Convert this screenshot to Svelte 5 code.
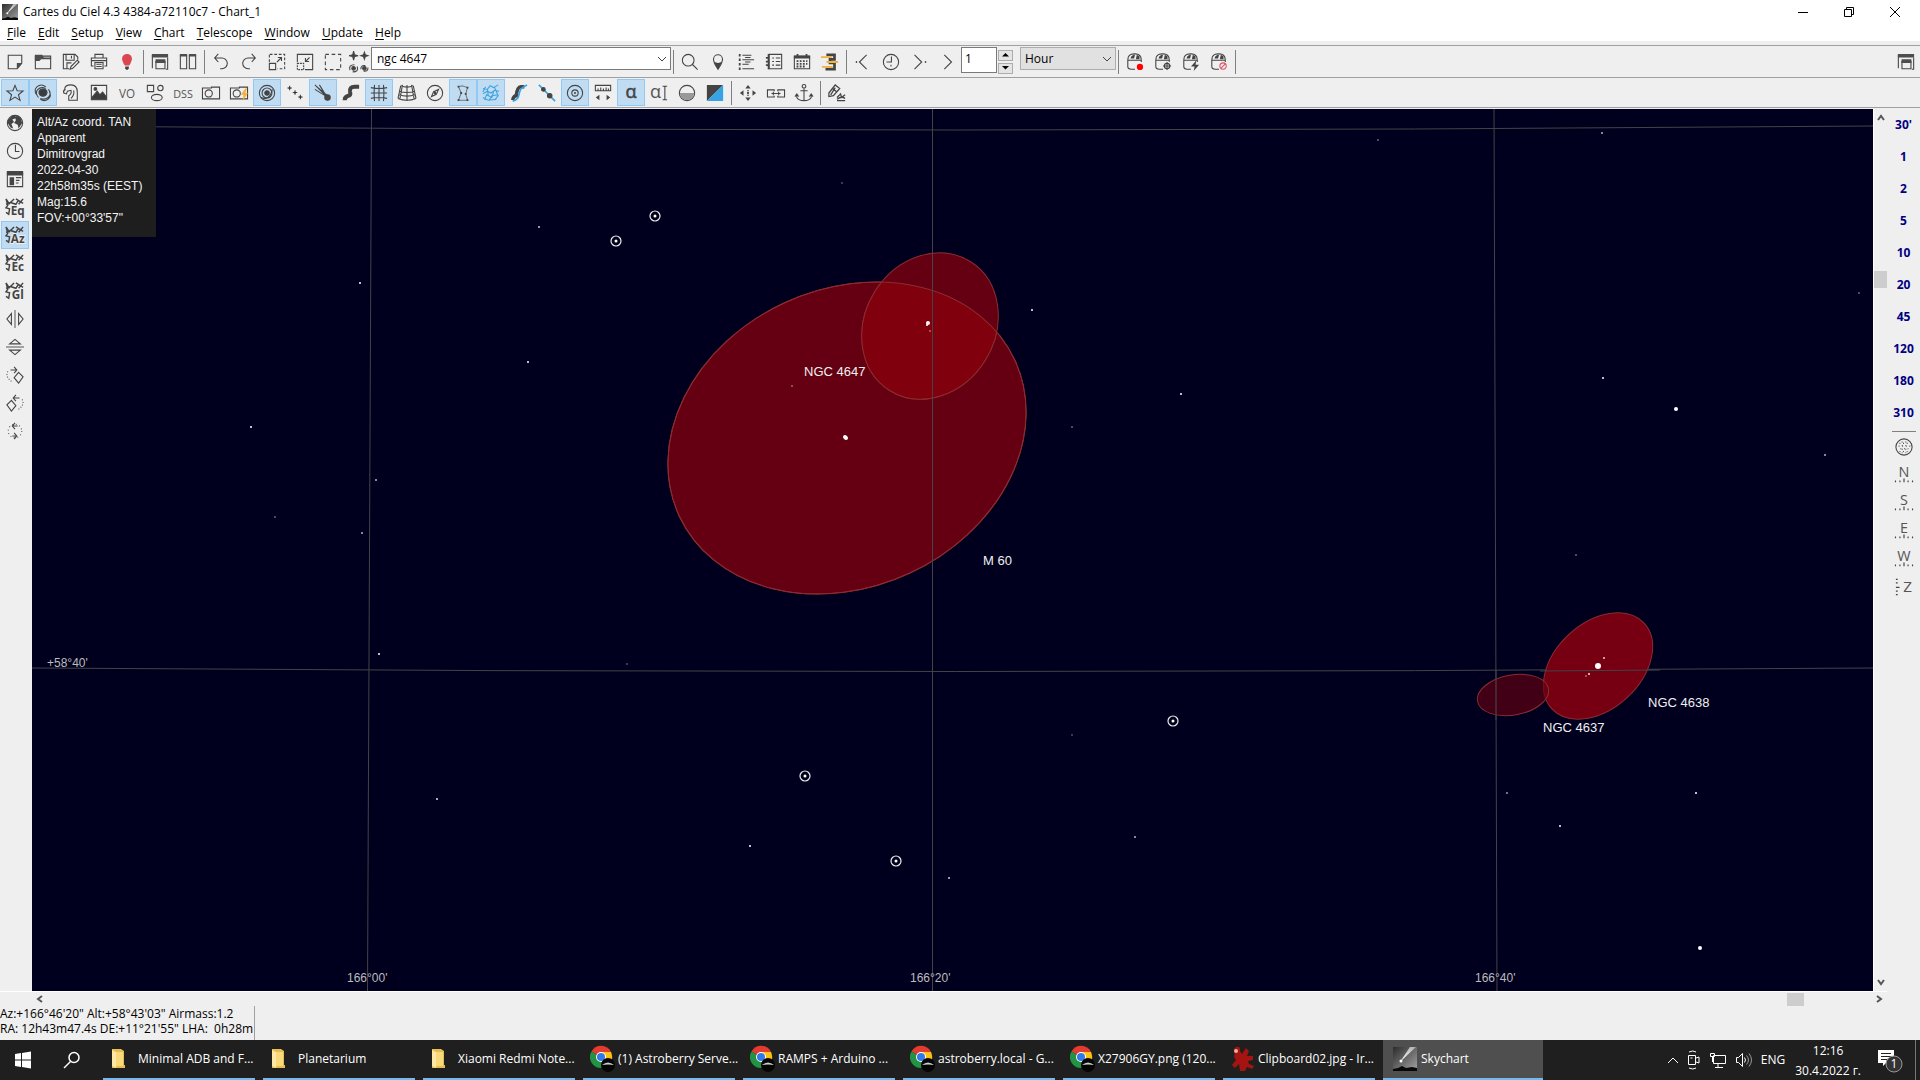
<script lang="ts">
    type Tool = { id: string; label: string; on?: boolean };

    // every drawing sits in a 20x20 box, stroked with the toolbar grey
    const legend = `<path d="M0 1l4 6M0 7l5-2 4-4M5 5l6 2 3-5M11 1l8 5M14 7l5-6M0 1l2 7-2 3 4 1-1 6-3-2" stroke-width="1.600"/>`;
    const mouse = `<path d="M2 8v7q0 3 4 3h4M17 8v2M2 8h15M2 8q0-7 7-7h1q7 0 7 7"/><path d="M5 6q1-4 5-4l-1 4H5zM12 2l3 2v3h-4z" fill="#444" stroke="none"/>`;
    const camera = `<path d="M.5 4.500h10v-1h9v13H.5z"/><circle cx="7.500" cy="10.500" r="4"/>`;
    const ticks = `<path d="M.5 16v2M5.500 16v2M10 14v4M14.500 16v2M19.500 16v2" stroke-width="1.300"/>`;

    const icons: Record<string, string> = {
        newchart: `<path d="M2.500 2.500h15v9l-5 6h-10z" /><path d="M18 11l-6 7v-7z" fill="#4d4d4d" stroke="none"/>`,
        open: `<path d="M1.500 17.500v-14h17v14z"/><path d="M1 2h8l2 3h8v2H8L6 9H1z" fill="#4d4d4d" stroke="none"/>`,
        save: `<path d="M8 17.500H1.500v-16h13l3 3v3M4.500 2v6h9V2M10.500 3v3M5.500 17v-6h5"/><path d="M10 15l7-7 2 2-7 7-3 1z"/>`,
        print: `<path d="M5.500 6V1.500h9V6M4 14.500H1.500v-9h17v9H16M5.500 10.500h9v7h-9zM2 8.500h16M7 12.500h6M7 15h6"/>`,
        tip: `<path d="M10 1a5.500 5.500 0 0 1 5.500 5.500Q15.500 9 12.500 14h-5Q4.500 9 4.500 6.500A5.500 5.500 0 0 1 10 1z" fill="#dc4650" stroke="none"/><path d="M8 15h4v2l-1 1.500H9L8 17z" fill="#444" stroke="none"/>`,
        cascade: `<path d="M1.500 17V2M18.500 5v13h-2M5.500 9v8.500h10V9"/><path d="M1 1h18v4H1zM5 7h11v4H5z" fill="#4d4d4d" stroke="none"/>`,
        tile: `<path d="M1.500 2v15.500h7V2M11.500 2v15.500h7V2"/><path d="M1 1h8v3H1zM11 1h8v3h-8z" fill="#4d4d4d" stroke="none"/>`,
        undo: `<path d="M7 1L3 5.500 7 10M3.500 5.500H11a6 6 0 0 1 0 12H9"/>`,
        redo: `<path d="M13 1l4 4.500L13 10M16.500 5.500H9a6 6 0 0 0 0 12h2"/>`,
        zoomin: `<path d="M1.500 11.500h7v7h-7zM10 10l5-5M11 5h4v4"/><path d="M2 1.500h16.500v16h-8M1.500 2v8" stroke-dasharray="3 2"/>`,
        zoomout: `<path d="M1.500 10V1.500h17v17H10M15 5l-4.500 4.500M10.500 5.500v4h4"/><path d="M1.500 11.500h7v7h-7z" stroke-dasharray="2 1"/>`,
        area: `<path d="M1.500 1.500h17v17h-17z" stroke-dasharray="4 3"/>`,
        search: `<circle cx="8" cy="8" r="6.500"/><path d="M12.500 12.500L18.500 18.500"/>`,
        pin: `<path d="M10 18Q5 11 5 7a5 5 0 0 1 10 0q0 4-5 11z"/><path d="M5.500 9.500q4.500 3 9 0L10 18.500z" fill="#444" stroke="none"/>`,
        list: `<path d="M6 2.500h10M6 7.500h13M6 12.500h7M6 17.500h13M9 5h6M9 10h6"/><path d="M2 2.500h2M2 7.500h2M2 12.500h2M2 17.500h2" stroke-width="3"/>`,
        notes: `<path d="M4.500 1.500h14v16h-14z"/><path d="M4 1v17M1 5.500h4M1 9.500h4M1 13.500h4" stroke-width="2"/><path d="M8 5.500h2M12 5.500h5M8 9.500h2M12 9.500h5M8 13.500h2M12 13.500h5"/>`,
        calendar: `<path d="M1.500 3.500h17v14h-17z"/><path d="M1 3h18v3H1zM4 1h2v3H4zM14 1h2v3h-2z" fill="#444" stroke="none"/><path d="M4 9h12M4 12h12M4 15h9" stroke-width="2" stroke-dasharray="2 1.500"/>`,
        sequence: `<path d="M6 2h9v5h-5v4h5v7H5" stroke-width="3"/><path d="M0 4.500h12M6 10h13M1 15.500h12" stroke="#f5b13c" stroke-width="2"/>`,
        back: `<path d="M14 2L6 10l8 8"/><path d="M2 10h1.500" stroke-width="2"/>`,
        clock: `<circle cx="10" cy="10" r="8.500"/><path d="M10.500 4v6H5M10 13v2"/>`,
        forward: `<path d="M5 2l8 8-8 8"/><path d="M16.500 10H18" stroke-width="2"/>`,
        play: `<path d="M7 2l8 8-8 8"/>`,
        connect: mouse + `<circle cx="15.500" cy="15.500" r="3.500" fill="#f00" stroke="none"/>`,
        slew: mouse + `<circle cx="14.500" cy="14.500" r="3"/><path d="M14.500 10v9M10 14.500h9"/>`,
        sync: mouse + `<path d="M16 8l-6 7h4l-1 5 6-7h-4z" fill="#444" stroke="none"/>`,
        abort: mouse + `<g stroke="#e05060"><circle cx="14.500" cy="14.500" r="3.500"/><path d="M12 17l5-5"/></g>`,
        star: `<path d="M10 1.500l2.400 6 6.600.3-5.200 4.100 1.800 6.300L10 14.600l-5.600 3.600 1.800-6.300L1 7.800l6.600-.3z"/>`,
        galaxy: `<ellipse cx="10" cy="9.500" rx="4.500" ry="4" fill="#3c3c3c"/><path d="M3 12C-2 5 6-2 13 3M5 15C-1 8 6 2 13 5M16 6c5 6-1 13-9 10M17 8c4 7-4 13-10 9"/>`,
        nebula: `<path d="M2 9Q1 8 3 6q0-5 7-5 7 0 7 8v9H7.500v-5Q11 11 10 7L6 8l-1 3-3-1q-1-3 2-4M13 7q1 5-3 9"/>`,
        picture: `<path d="M1.500 1.500h17v16h-17z"/><path d="M2 15l6-7 3 4 3-3 4 5v3H2z" fill="#3c3c3c"/><circle cx="6" cy="5.500" r="1.500" fill="#3c3c3c"/>`,
        vo: `<text x="10" y="15" text-anchor="middle" font-size="13" fill="#555" stroke="none">VO</text>`,
        shapes: `<path d="M1.500 1.500h7v7h-7z"/><circle cx="16" cy="4.500" r="3"/><ellipse cx="12" cy="15" rx="6" ry="3.500"/>`,
        dss: `<text x="10" y="15" text-anchor="middle" font-size="12" fill="#555" stroke="none">DSS</text>`,
        camera,
        flash: camera + `<path d="M17 5l-5 7h3l-1 7 6-9h-3l2-5z" fill="#f5b13c" stroke="none"/>`,
        planet: `<circle cx="10" cy="10" r="8.500"/><circle cx="10" cy="10" r="5.500"/><circle cx="10" cy="10" r="2.500" fill="#444"/><path d="M3 15q10 4 13-9"/>`,
        asteroid: `<path d="M4 2v5M1.500 4.500h5M10 7v5M7.500 9.500h5M16 12v5M13.500 14.500h5"/><path d="M3 3.500h2v2H3zM9 8.500h2v2H9zM15 13.500h2v2h-2z" fill="#333" stroke="none"/>`,
        comet: `<path d="M1 1l13 13M1 6l13 8M6 1l8 13M3 3l12 10"/><circle cx="15" cy="15" r="3" fill="#444"/>`,
        milkyway: `<path d="M3 18q0-4 4-5 3 0 2-4-1-6 5-6h5" stroke-width="4.500"/>`,
        grid: `<path d="M5 1q-1 9 0 18M10 1v18M15 1q1 9 0 18M1 4q9 2 18 0M1 10h18M1 16q9-2 18 0"/>`,
        azgrid: `<path d="M3 2q7 3 14 0M2 8q8 3 16 0M0 16q10 4 20 0M5 1L2 17M10 1v18M15 1l3 16M1 12q9 3 18 0M3 2L0 16M17 2l3 14"/>`,
        compass: `<circle cx="10" cy="10" r="8.500"/><path d="M14 6l-2.500 5.500L6 14l2.500-5.500z"/><circle cx="10" cy="10" r="1" fill="#444"/>`,
        figure: `<path d="M5 3l4-1 6 2-2 7 2 7H5l3-8z" stroke="#777"/><path d="M4 3h2M14 4h2M7 10h2M4 18h2M14 18h2M12 11h2" stroke-width="2"/>`,
        boundary: `<g stroke="#3da3e0"><path d="M1 5l5 1 3-4 4 2 5-3M1 11l5-3 4 2 4-3 5 1M3 18l2-6 6 3 2-7M8 18l3-5 7-1M4 3L1 9M14 4l4 9-4 5M6 6l1 7M1 15l6 3 9-1"/></g>`,
        outline: `<path d="M3 18q1-5 4-5 1-10 5-10h4" stroke-width="4"/><path d="M3 19C15 16 5 6 19 1" stroke="#36a4e4" stroke-width="1.800"/>`,
        ecliptic: `<path d="M1 1l18 18" stroke="#36a4e4" stroke-width="1.800"/><circle cx="6" cy="6" r="2" fill="#444"/><circle cx="13" cy="13" r="2.500" fill="#444"/>`,
        mark: `<circle cx="10" cy="10" r="8.500"/><circle cx="10" cy="10" r="3.500"/><circle cx="10" cy="10" r=".5"/>`,
        ruler: `<path d="M1.500 1.500h17v6h-17zM4.500 5v2M7.500 4v3M10.500 5v2M13.500 4v3M16 5v2"/><path d="M6 12v6l-4-3zM14 12v6l4-3z" fill="#444" stroke="none"/>`,
        alpha: `<text x="10" y="16" text-anchor="middle" font-size="20" fill="#444" stroke="#444" stroke-width=".6">α</text>`,
        alphabar: `<text x="6" y="16" text-anchor="middle" font-size="20" fill="#555" stroke="none">α</text><path d="M14 2.500h5M14 17.500h5M16.500 3v14"/>`,
        horizon: `<circle cx="10" cy="10" r="8.500"/><path d="M2 10h16a8 8 0 0 1-16 0z" fill="#999" stroke="none"/>`,
        invert: `<path d="M1 1h18L1 19z" fill="#444" stroke="none"/><path d="M19 1v18H1z" fill="#36a4e4" stroke="none"/>`,
        move: `<path d="M10 1l3 4H7zM10 19l3-4H7zM1 10l4-3v6zM19 10l-4-3v6z" fill="#444" stroke="none"/><path d="M9 10h2M10 7v1M10 12v1" stroke-width="2"/>`,
        link: `<path d="M8 8V6.500H.5v8H8V13M12 8V6.500h7.500v8H12V13M5 10.500h10M7 8.500v4M13 8.500v4"/>`,
        anchor: `<circle cx="10" cy="2.500" r="2"/><path d="M10 5v13M6 7.500h8M2 12v3q2 3.500 8 3.500t8-3.500v-3M0 14l2-3 2 3M20 14l-2-3-2 3"/>`,
        pencil: `<path d="M1 10l7-9 5 4-7 8-5 1zM5 5l5 4M3 12l5-8M10 18.500h9M10 15l4-4 1 4 4-3M10 17q5-4 9-1" stroke-width="1.400"/>`,
        globe: `<circle cx="10" cy="10" r="8.500"/><path d="M2 7l5-5 4 0-1 3-3 1 2 3-3 2 2 5-3-1-3-5zM12 2l4 2 2 6-4 6-1-4-4-2 2-3-1-3z" fill="#444" stroke="none"/>`,
        time: `<circle cx="10" cy="10" r="8.500"/><path d="M10.500 3v7.500H15"/>`,
        info: `<path d="M1.500 2v16.500h17V2"/><path d="M1 1h18v5H1zM4 8h5v9H4z" fill="#444" stroke="none"/><path d="M11 8.500h6M11 11.500h4M11 14.500h3"/>`,
        fliph: `<path d="M10 0v20" stroke="#999" stroke-width="2"/><path d="M6 4v12l-5-6zM14 4v12l5-6z"/>`,
        flipv: `<path d="M0 10h20" stroke="#999" stroke-width="2"/><path d="M4 6.500h12l-6-5zM4 13.500h12l-6 5z"/>`,
        rotr: `<path d="M14 7l5 5-5 7-5-6zM5 4.500h6M9 1l3 3.500L9 8"/><path d="M2 6q-3 6 4 11" stroke-dasharray="1 2"/>`,
        rotl: `<path d="M6 7l-5 5 5 7 5-6zM15 4.500H9M11 1L8 4.500 11 8"/><path d="M18 6q3 6-4 11" stroke-dasharray="1 2"/>`,
        rotate: `<path d="M13 4.500H8M10 1L7 4.500 10 8M7 15.500h5M9 12l3 3.500L9 19"/><circle cx="10" cy="10" r="7.500" stroke-dasharray="1 3"/>`,
        allsky: `<circle cx="10" cy="10" r="9"/><path d="M5 6h10M4 9h13M6 12h10M5 15h10M8 4v13M12 4v13" stroke-dasharray="1 3"/>`,
        zenith: `<path d="M1 1.500h2M1 5.500h2M1 10.500h4M1 14.500h2M1 18.500h2" stroke-width="1.300"/><text x="14" y="16" text-anchor="middle" font-size="17" fill="#555" stroke="none">Z</text>`,
    };
    for (const s of ["Eq", "Az", "Ec", "Gl"]) {
        icons[s] = legend + `<text x="13" y="19" text-anchor="middle" font-size="13" font-weight="700" fill="#444" stroke="#efefef" stroke-width="2" paint-order="stroke">${s}</text>`;
    }
    for (const s of ["N", "S", "E", "W"]) {
        icons[s] = ticks + `<text x="10" y="12" text-anchor="middle" font-size="16" fill="#555" stroke="none">${s}</text>`;
    }

    function tools(names: string, on: string[] = []): Tool[] {
        return names.split(" ").map((id) => ({ id, label: id, on: on.includes(id) }));
    }

    const fileTools = tools("newchart open save print tip");
    const windowTools = tools("cascade tile");
    const viewTools = tools("undo redo zoomin zoomout area");
    const findTools = tools("search pin list notes calendar sequence");
    const timeTools = tools("back clock forward play");
    const scopeTools = tools("connect slew sync abort");
    const objectTools = tools(
        "star galaxy nebula picture vo shapes dss camera flash planet asteroid comet milkyway grid azgrid compass figure boundary outline ecliptic mark ruler alpha alphabar horizon invert",
        ["star", "galaxy", "planet", "comet", "grid", "figure", "boundary", "mark", "alpha"]
    );
    const moveTools = tools("move link anchor");
    const leftTools = tools("globe time info Eq Az Ec Gl fliph flipv rotr rotl rotate", ["Az"]);
    const rightTools = tools("allsky N S E W zenith");

    const menus = ["File", "Edit", "Setup", "View", "Chart", "Telescope", "Window", "Update", "Help"];
    const fields = ["30'", "1", "2", "5", "10", "20", "45", "120", "180", "310"];

    // x, y, radius, opacity
    const stars = [
        [539, 227, 1, 0.8], [360, 283, 1, 1], [528, 362, 1, 1], [251, 427, 1, 1],
        [376, 480, 1, 0.7], [275, 517, 1, 0.4], [362, 533, 1, 0.7], [379, 654, 1, 1],
        [627, 664, 1, 0.3], [437, 799, 1, 0.9], [750, 846, 1, 1], [949, 878, 1, 0.8],
        [1135, 837, 1, 0.7], [1072, 735, 1, 0.3], [1072, 427, 1, 0.4], [1181, 394, 1, 1],
        [1032, 310, 1, 1], [842, 183, 1, 0.3], [792, 386, 1, 0.4], [845, 437, 2, 1],
        [846, 438, 2, 1], [928, 323, 2, 1], [927, 325, 1, 1], [930, 331, 1, 0.4],
        [1378, 140, 1, 0.4], [1602, 133, 1, 0.7], [1859, 293, 1, 0.4], [1603, 378, 1, 1],
        [1676, 409, 2, 1], [1825, 455, 1, 0.7], [1576, 555, 1, 0.4], [1696, 793, 1, 1],
        [1507, 793, 1, 0.6], [1560, 826, 1, 1], [1700, 948, 2, 1], [1598, 666, 3, 1],
        [1604, 658, 1, 0.8], [1589, 674, 1, 0.9], [1586, 676, 1, 0.4],
    ];
    const variables = [[655, 216], [616, 241], [1173, 721], [805, 776], [896, 861]];

    const tasks = [
        { icon: "folder", text: "Minimal ADB and F..." },
        { icon: "folder", text: "Planetarium" },
        { icon: "folder", text: "Xiaomi Redmi Note..." },
        { icon: "chrome", text: "(1) Astroberry Serve..." },
        { icon: "chrome", text: "RAMPS + Arduino ..." },
        { icon: "chrome", text: "astroberry.local - G..." },
        { icon: "chrome", text: "X27906GY.png (120..." },
        { icon: "irfan", text: "Clipboard02.jpg - Ir..." },
        { icon: "sky", text: "Skychart", active: true },
    ];

    let query = $state("ngc 4647");
    let step = $state("1");
    let unit = $state("Hour");
</script>

{#snippet toolbar(list: Tool[])}
    {#each list as tool}
        <button class="tool" class:on={tool.on} aria-label={tool.label}>
            <svg class="icon" viewBox="0 0 20 20">{@html icons[tool.id]}</svg>
        </button>
    {/each}
{/snippet}

{#snippet comet(size: number)}
    <svg width={size} height={size} viewBox="0 0 24 24">
        <defs>
            <linearGradient id="night" x1="0" y1="0" x2="1" y2="1">
                <stop offset="0" stop-color="#2c2c2c" />
                <stop offset="1" stop-color="#a4a4a4" />
            </linearGradient>
            <linearGradient id="tail" x1="0" y1="1" x2="1" y2="0">
                <stop offset="0" stop-color="#fff" />
                <stop offset="1" stop-color="#aaa" />
            </linearGradient>
        </defs>
        <path d="M0 0h24v24H0z" fill="url(#night)" />
        <path d="M7 15L17 0h6z" fill="url(#tail)" />
        <circle cx="8" cy="14" r="1.500" fill="#fff" />
        <path d="M0 22l5-1 4-2 4 2 6-1 5 1v3H0z" fill="#080808" />
    </svg>
{/snippet}

<div class="window">
    <header class="title">
        {@render comet(16)}
        <span class="caption">Cartes du Ciel 4.3 4384-a72110c7 - Chart_1</span>
        <button class="sys" aria-label="Minimize"><svg viewBox="0 0 10 10"><path d="M0 5.500h10" /></svg></button>
        <button class="sys" aria-label="Restore"><svg viewBox="0 0 10 10"><path d="M.5 2.500h7v7h-7zM2.500 2V.5h7v7H8" /></svg></button>
        <button class="sys" aria-label="Close"><svg viewBox="0 0 10 10"><path d="M0 0l10 10M10 0L0 10" /></svg></button>
    </header>

    <nav class="menu">
        {#each menus as item}
            <button><u>{item[0]}</u>{item.slice(1)}</button>
        {/each}
    </nav>

    <div class="bar main-bar">
        {@render toolbar(fileTools)}
        <i class="sep"></i>
        {@render toolbar(windowTools)}
        <i class="sep"></i>
        {@render toolbar(viewTools)}
        <button class="tool objects" aria-label="Objects">
            <svg class="icon" viewBox="0 0 20 20">
                <path d="M4 -2l1 4 4 1-4 1-1 4-1-4-4-1 4-1zM16 -1l1 3 3 1-3 1-1 3-1-3-3-1 3-1z" fill="#444" />
                <circle cx="4" cy="17" r="2" fill="#444" /><path d="M0 19q-2-6 5-6M8 15q2 6-5 6" />
                <circle cx="16" cy="17" r="2" fill="#444" /><path d="M12 18q0-5 5-4M20 16q0 5-5 4" />
            </svg>
        </button>
        <div class="combo">
            <input aria-label="Search object" bind:value={query} />
            <svg viewBox="0 0 10 6"><path d="M1 1l4 4 4-4" /></svg>
        </div>
        <i class="sep"></i>
        {@render toolbar(findTools)}
        <i class="sep"></i>
        {@render toolbar(timeTools)}
        <input class="step" aria-label="Time step" bind:value={step} />
        <div class="spin">
            <button aria-label="Increase"><svg viewBox="0 0 8 4"><path d="M0 4l4-4 4 4z" /></svg></button>
            <button aria-label="Decrease"><svg viewBox="0 0 8 4"><path d="M0 0l4 4 4-4z" /></svg></button>
        </div>
        <div class="unit">
            <select aria-label="Time unit" bind:value={unit}>
                <option>Hour</option>
                <option>Minute</option>
                <option>Day</option>
            </select>
            <svg viewBox="0 0 10 6"><path d="M1 1l4 4 4-4" /></svg>
        </div>
        <i class="sep"></i>
        {@render toolbar(scopeTools)}
        <i class="sep"></i>
        <button class="tool last" aria-label="Restore chart">
            <svg class="icon" viewBox="0 0 20 20">{@html icons.cascade}</svg>
        </button>
    </div>

    <div class="bar object-bar">
        {@render toolbar(objectTools)}
        <i class="sep"></i>
        {@render toolbar(moveTools)}
        <i class="sep"></i>
        {@render toolbar(tools("pencil"))}
    </div>

    <main>
        <aside class="left">{@render toolbar(leftTools)}</aside>

        <section class="chart">
            <svg class="sky" viewBox="32 109 1841 882" preserveAspectRatio="xMidYMid slice">
                <g class="lines">
                    <path d="M32 126Q960 134 1873 126M32 668Q960 675 1873 668" />
                    <path d="M371.500 109L367.500 991M932.500 109v882M1494 109l3 882" />
                </g>
                <g class="galaxies">
                    <ellipse cx="847" cy="438" rx="185" ry="149" transform="rotate(-25 847 438)" fill="#640012" />
                    <ellipse cx="930" cy="326" rx="76" ry="65" transform="rotate(-58 930 326)" fill="#640012" />
                    <clipPath id="m60">
                        <ellipse cx="847" cy="438" rx="185" ry="149" transform="rotate(-25 847 438)" />
                    </clipPath>
                    <g clip-path="url(#m60)">
                        <ellipse cx="930" cy="326" rx="76" ry="65" transform="rotate(-58 930 326)" fill="#80000e" />
                    </g>
                    <ellipse cx="847" cy="438" rx="185" ry="149" transform="rotate(-25 847 438)" fill="none" />
                    <ellipse cx="1598" cy="666" rx="63" ry="43" transform="rotate(-43 1598 666)" fill="#760012" />
                    <ellipse cx="1513" cy="695" rx="36" ry="20" transform="rotate(-10 1513 695)" fill="#640012" fill-opacity=".65" />
                </g>
                <path class="lines" d="M932.500 250v345M1496 670v50M1540 671l120-1" />
                {#each stars as [x, y, r, opacity]}
                    <circle cx={x} cy={y} {r} fill="#fff" {opacity} />
                {/each}
                {#each variables as [x, y]}
                    <circle class="ring" cx={x} cy={y} r="5" />
                    <circle cx={x} cy={y} r="1.500" fill="#fff" />
                {/each}
                <g class="names">
                    <text x="804" y="376">NGC 4647</text>
                    <text x="983" y="565">M 60</text>
                    <text x="1648" y="707">NGC 4638</text>
                    <text x="1543" y="732">NGC 4637</text>
                </g>
                <g class="axis">
                    <text x="47" y="667">+58°40'</text>
                    <text x="347" y="982">166°00'</text>
                    <text x="910" y="982">166°20'</text>
                    <text x="1475" y="982">166°40'</text>
                </g>
            </svg>
            <div class="details">
                Alt/Az coord. TAN<br />
                Apparent<br />
                Dimitrovgrad<br />
                2022-04-30<br />
                22h58m35s (EEST)<br />
                Mag:15.6<br />
                FOV:+00°33'57"
            </div>
        </section>

        <div class="scroll vertical">
            <svg viewBox="0 0 8 6"><path d="M1 5l3-4 3 4" /></svg>
            <i class="before"></i>
            <i class="thumb"></i>
            <i class="after"></i>
            <svg viewBox="0 0 8 6"><path d="M1 1l3 4 3-4" /></svg>
        </div>

        <aside class="right">
            {#each fields as field}
                <button class="field">{field}</button>
            {/each}
            <hr />
            {@render toolbar(rightTools)}
        </aside>
    </main>

    <div class="scroll horizontal">
        <svg viewBox="0 0 6 8"><path d="M5 1L1 4l4 3" /></svg>
        <i class="before"></i>
        <i class="thumb"></i>
        <i class="after"></i>
        <svg viewBox="0 0 6 8"><path d="M1 1l4 3-4 3" /></svg>
    </div>

    <footer class="status">
        <p>
            Az:+166°46'20" Alt:+58°43'03" Airmass:1.2<br />
            RA: 12h43m47.4s DE:+11°21'55" LHA:&nbsp; 0h28m
        </p>
    </footer>

    <div class="taskbar">
        <button class="start" aria-label="Start">
            <svg width="16" height="18" viewBox="0 0 16 18"><path d="M0 3l6-1v6.500H0zM7 2l9-1.500v8H7zM0 9.500h6V16l-6-1zM7 9.500h9v8L7 16z" fill="#fff" /></svg>
        </button>
        <button class="start find" aria-label="Search">
            <svg width="18" height="18" viewBox="0 0 18 18" fill="none" stroke="#fff" stroke-width="1.500"><circle cx="11" cy="6.500" r="5" /><path d="M7.500 10.500L1 17" /></svg>
        </button>
        {#each tasks as task}
            <button class="task" class:active={task.active}>
                <span class="task-icon {task.icon}">
                    {#if task.icon === "folder"}
                        <svg width="14" height="20" viewBox="0 0 14 20"><path d="M0 0h9l3 2v14h1v3H0z" fill="#e8bd50" /><path d="M0 1l4 2v16l-4-2z" fill="#ffe9a2" /><path d="M4 3h7v14H4z" fill="#f8da7c" /></svg>
                    {:else if task.icon === "chrome"}
                        <svg width="26" height="28" viewBox="0 0 26 28">
                            <path d="M11 12L1.500 6.500A11 11 0 0 1 21 7z" fill="#e33b2e" />
                            <path d="M11 12V7h10a11 11 0 0 1-9 16z" fill="#fbc116" />
                            <path d="M11 12l1 11A11 11 0 0 1 1.500 6.500z" fill="#229342" />
                            <circle cx="11" cy="12" r="5" fill="#fff" /><circle cx="11" cy="12" r="4" fill="#3478e5" />
                            <circle cx="18" cy="20" r="7" fill="#050505" /><path d="M12 20q6-5 12 0-6-1-12 0z" fill="#ccc" />
                        </svg>
                    {:else if task.icon === "irfan"}
                        <svg width="24" height="26" viewBox="0 0 24 26"><path d="M5 1q5-1 4 4l2 3 4-6 3 3-2 5h6v4l-5 1 1 3 5 2-2 3-5-2-2 4h-5l-1-7-4 4-3-3 4-5q-3-3-1-7-3-4 1-6z" fill="#a51410" /><circle cx="5" cy="5" r="2" fill="#e8b0a0" /></svg>
                    {:else}
                        {@render comet(24)}
                    {/if}
                </span>
                {task.text}
            </button>
        {/each}
        <div class="tray">
            <svg width="12" height="8" viewBox="0 0 12 8"><path d="M1 7l5-5 5 5" /></svg>
            <svg width="14" height="20" viewBox="0 0 14 20"><path d="M1.500 5.500h7v9h-7zM9 8l3-1v6l-3-1M2 2q4-2 7 0M2 18q4 2 7 0" /><path d="M3.500 8h2" /></svg>
            <svg width="18" height="18" viewBox="0 0 18 18"><path d="M4.500 4.500h12v8h-12zM9 13v3M6 16.500h8M1.500 2.500h4v3h-4zM3.500 6v5" /></svg>
            <svg width="18" height="18" viewBox="0 0 18 18"><path d="M1.500 6.500h2l4-4v13l-4-4h-2zM9.500 6.500q2 2.500 0 5" /><path d="M11.500 4.500q4 4.500 0 9M14 2.500q5 6.500 0 13" stroke="#999" /></svg>
            <span>ENG</span>
            <time>12:16<br />30.4.2022 г.</time>
            <svg class="note" width="26" height="26" viewBox="0 0 26 26">
                <path d="M1 3h16v13H9l-3 3v-3H1z" fill="#fff" stroke="none" />
                <path d="M4 6.500h10M4 9.500h10M4 12.500h6" stroke="#222" />
                <circle cx="17" cy="17" r="8" fill="#333" stroke="#999" />
                <text x="17" y="21" text-anchor="middle" font-size="12" fill="#fff" stroke="none">1</text>
            </svg>
        </div>
    </div>
</div>

<style>
    :global(body) {
        margin: 0;
    }
    .window {
        display: flex;
        flex-direction: column;
        min-height: 100vh;
        background: #efefef;
        color: #000;
        font: 12px/16px "Segoe UI", "Open Sans", "Noto Sans", sans-serif;
    }
    button,
    input,
    select {
        box-sizing: border-box;
        margin: 0;
        padding: 0;
        border: 0;
        background: none;
        color: inherit;
        font: inherit;
    }
    svg {
        display: block;
        flex: none;
    }

    .title {
        display: flex;
        align-items: center;
        height: 23px;
        padding: 0 2px;
        background: #fff;
    }
    .caption {
        flex: 1;
        padding-left: 5px;
    }
    .sys {
        width: 46px;
    }
    .sys svg {
        width: 10px;
        margin: auto;
        fill: none;
        stroke: #000;
    }
    .menu {
        display: flex;
        height: 18px;
        padding-left: 1px;
        background: #fff;
    }
    .menu button {
        height: 20px;
        padding: 0 6px;
    }
    .menu u {
        text-underline-offset: 2px;
    }

    .bar {
        display: flex;
        align-items: center;
        box-sizing: border-box;
        padding-left: 1px;
    }
    .main-bar {
        height: 32px;
        margin-top: 4px;
        border-top: 1px solid #a0a0a0;
    }
    .object-bar {
        height: 31px;
        border-top: 1px solid #a0a0a0;
        border-bottom: 1px solid #a0a0a0;
        margin-bottom: 1px;
    }
    .tool {
        display: flex;
        align-items: center;
        justify-content: center;
        flex: none;
        width: 28px;
        height: 27px;
        border: 1px solid transparent;
    }
    .tool.on {
        background: #c0dcf3;
        border-color: #90c8f6;
    }
    .objects {
        width: 24px;
    }
    .last {
        margin-left: auto;
    }
    .icon {
        width: 18px;
        height: 18px;
        fill: none;
        stroke: #444;
        stroke-width: 1.2;
        overflow: visible;
    }
    .sep {
        width: 1px;
        height: 24px;
        margin: 0 2px;
        background: #808080;
    }
    .combo,
    .unit {
        position: relative;
        align-self: flex-start;
        margin-top: 1px;
    }
    .combo {
        width: 300px;
    }
    .combo input {
        width: 100%;
        height: 23px;
        padding: 0 5px;
        border: 1px solid #7a7a7a;
        background: #fff;
    }
    .combo svg,
    .unit svg {
        position: absolute;
        top: 9px;
        right: 4px;
        width: 10px;
        fill: none;
        stroke: #444;
        pointer-events: none;
    }
    .step {
        align-self: flex-start;
        width: 36px;
        height: 26px;
        margin-top: 1px;
        padding: 0 3px 4px;
        border: 1px solid #7a7a7a;
        background: #fff;
    }
    .spin {
        display: flex;
        flex-direction: column;
        gap: 2px;
        margin: 0 7px 0 1px;
    }
    .spin button {
        width: 15px;
        height: 11px;
        border: 1px solid #adadad;
        background: #e4e4e4;
    }
    .spin svg {
        width: 7px;
        margin: auto;
    }
    .unit select {
        width: 96px;
        height: 23px;
        padding: 0 4px;
        border: 1px solid #adadad;
        background: #e1e1e1;
        appearance: none;
    }

    main {
        display: flex;
        flex: 1;
    }
    .left {
        width: 32px;
        padding-left: 1px;
        box-sizing: border-box;
    }
    .left .tool,
    .right .tool {
        height: 28px;
    }
    .chart {
        position: relative;
        flex: 1;
        background: #00001e;
        overflow: hidden;
    }
    .sky {
        width: 100%;
        height: 100%;
        position: absolute;
        font-family: Arial, "Liberation Sans", sans-serif;
    }
    .lines {
        fill: none;
        stroke: #434348;
    }
    .galaxies {
        stroke: #8c2c30;
    }
    .ring {
        fill: none;
        stroke: #eee;
        stroke-width: 1.2;
    }
    .names {
        font-size: 13px;
        fill: #f0f0f0;
    }
    .axis {
        font-size: 12px;
        fill: #bcbcbc;
    }
    .details {
        position: absolute;
        top: 0;
        left: 0;
        box-sizing: border-box;
        width: 124px;
        height: 128px;
        padding: 5px;
        background: #1e1e1e;
        color: #f4f4f4;
        font: 12px/16px Arial, "Liberation Sans", sans-serif;
        white-space: nowrap;
    }

    .scroll {
        display: flex;
        align-items: center;
    }
    .scroll svg {
        width: 8px;
        height: 8px;
        fill: none;
        stroke: #555;
        stroke-width: 2;
    }
    .thumb {
        background: #cdcdcd;
    }
    .vertical {
        flex-direction: column;
        width: 13px;
        padding: 5px 0;
        border-left: 1px solid #fff;
    }
    .vertical .thumb {
        width: 100%;
        height: 17px;
    }
    .vertical .before {
        flex: 178;
    }
    .vertical .after {
        flex: 822;
    }
    .horizontal {
        height: 14px;
        margin-right: 33px;
        padding: 0 4px 0 36px;
        border-top: 1px solid #fff;
    }
    .horizontal .thumb {
        width: 17px;
        height: 13px;
    }
    .horizontal .before {
        flex: 961;
    }
    .horizontal .after {
        flex: 39;
    }

    .right {
        display: flex;
        flex-direction: column;
        align-items: center;
        width: 33px;
    }
    .field {
        width: 100%;
        height: 32px;
        color: #000080;
        font-weight: 700;
    }
    .right hr {
        width: 24px;
        margin: 2px 0 1px;
        border: 0;
        border-top: 1px solid #808080;
    }

    .status {
        height: 34px;
    }
    .status p {
        width: 254px;
        height: 34px;
        margin: 0;
        border-right: 1px solid #a0a0a0;
        line-height: 15px;
        white-space: nowrap;
    }

    .taskbar {
        display: flex;
        height: 40px;
        background: #1f1f1f;
        color: #fff;
    }
    .start {
        display: flex;
        align-items: center;
        width: 48px;
        padding-left: 15px;
    }
    .find {
        width: 55px;
    }
    .task {
        display: flex;
        align-items: center;
        flex: 0 1 152px;
        min-width: 0;
        margin-right: 8px;
        border-bottom: 2px solid #76b9ed;
        white-space: nowrap;
    }
    .task.active {
        flex-basis: 160px;
        background: #4f4f4f;
    }
    .task-icon {
        display: flex;
        justify-content: center;
        box-sizing: border-box;
        flex: none;
        width: 35px;
        padding-left: 5px;
    }
    .task-icon.folder {
        padding: 0 3px 0 0;
    }
    .task-icon.sky {
        position: static;
        width: 38px;
        height: auto;
    }
    .tray {
        display: flex;
        align-items: center;
        gap: 8px;
        margin-left: auto;
        margin-right: 4px;
        padding-right: 12px;
        border-right: 1px solid #777;
    }
    .tray svg {
        fill: none;
        stroke: #fff;
    }
    .tray time {
        padding: 2px 8px 0 2px;
        text-align: center;
        line-height: 20px;
    }
</style>
